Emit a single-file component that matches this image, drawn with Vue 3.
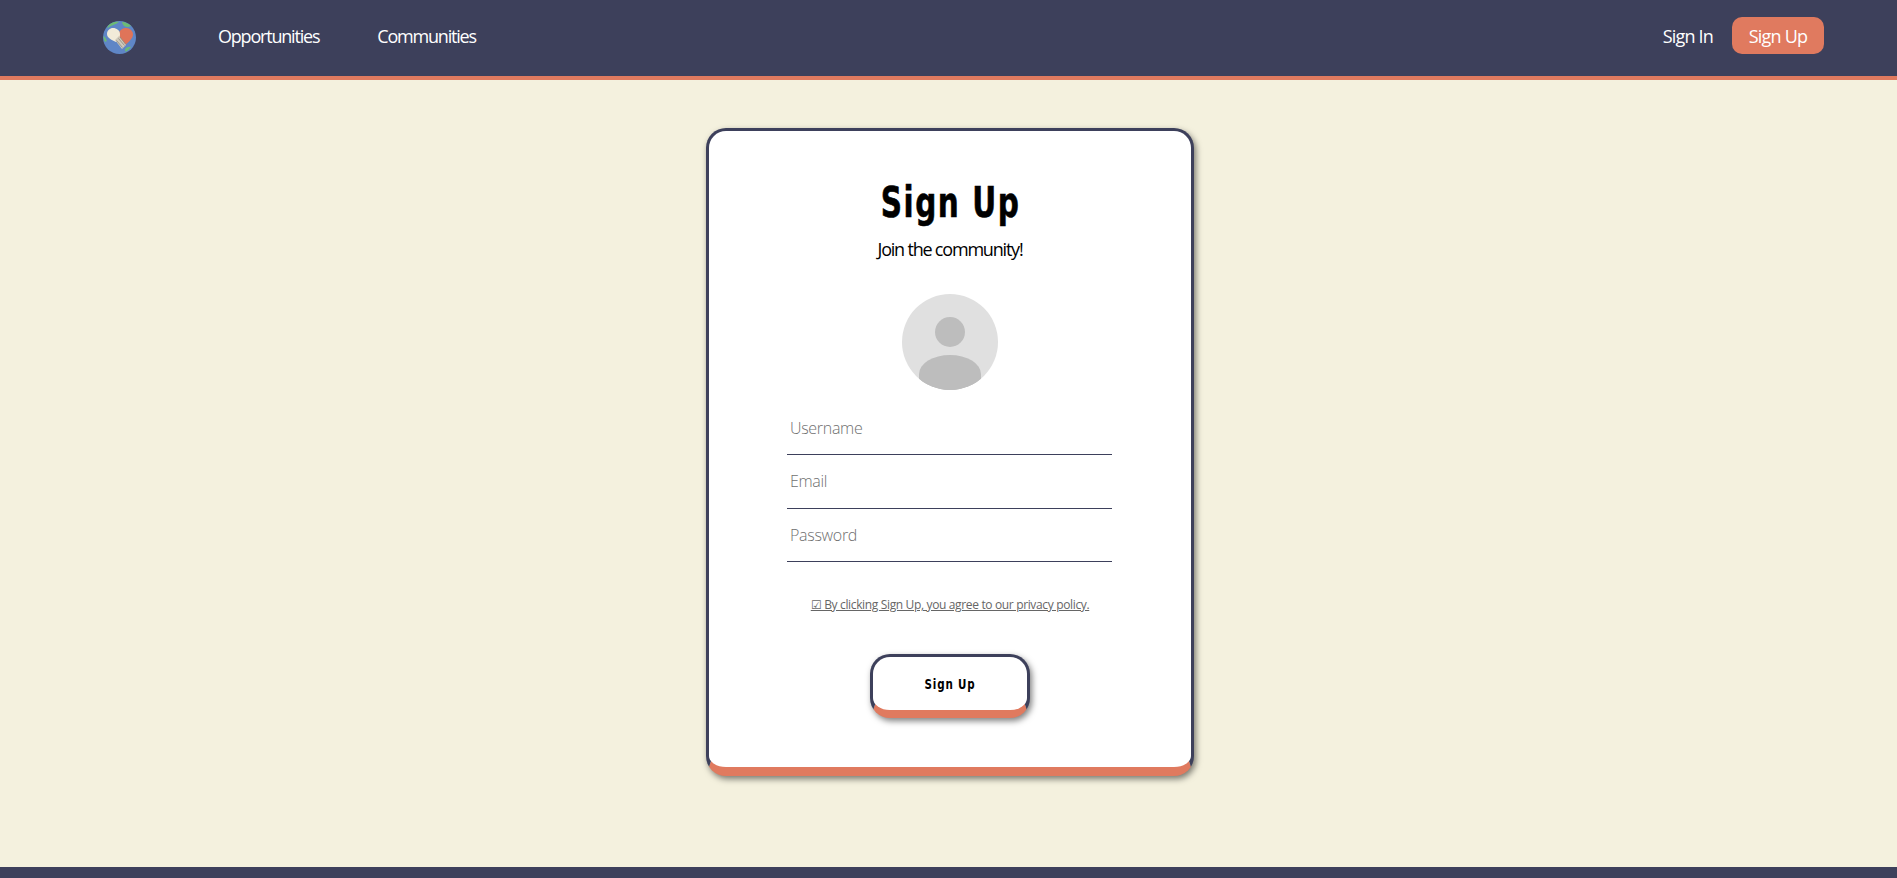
<script setup>
const navLinks = ['Opportunities', 'Communities']
const fields = [
  { name: 'username', type: 'text', placeholder: 'Username' },
  { name: 'email', type: 'email', placeholder: 'Email' },
  { name: 'password', type: 'password', placeholder: 'Password' }
]
</script>

<template>
  <div class="page">
    <header class="navbar">
      <a class="logo" href="#">
        <svg width="33" height="33" viewBox="0 0 33 33">
          <circle cx="16.500" cy="16.500" r="16.500" fill="#5f86c6" />
          <path d="M7 3C10 1.200 13 .5 16 .5c-1 1.500-2.500 2.200-4 2.800C10 4.200 7 5 4.500 7.500 4 6 5.500 4 7 3z" fill="#6dbb74" />
          <path d="M19 .8c3.500.5 6.500 1.800 9 4.200-2 1.200-4 1.400-6 .6C20.500 5 19.300 3 19 .8z" fill="#6dbb74" />
          <path d="M.6 15c1.500 1 2.500 2.500 3.200 5-.8.800-1.600.8-2.100.4C1 19 .4 17 .6 15z" fill="#6dbb74" />
          <path d="M23 27c1.800-.8 3.500-1.500 5-1-1.500 2.200-3.500 3.800-5.500 4.800-.7-1.200-.5-2.800.5-3.800z" fill="#6dbb74" />
          <path d="M16 12C17 8.500 20 7 23 7c4 0 7 3 7 6.500S26 21 21 25l-5-6z" fill="#df7459" />
          <path d="M4 13c0-3.500 3-6 6-6 3.500 0 7 2.500 7 6 0 2-.5 3.500-1 5l-3 3c-4-2-9-4-9-8z" fill="#f1ebd9" />
          <path d="M12 19l4-4 7 9-4 4z" fill="#cfc9ba" />
          <path d="M13.500 19.500l6 7M15.500 17.500l6 7M17 16l5.500 7" stroke="#8e8a80" stroke-width=".8" fill="none" />
        </svg>
      </a>
      <nav class="nav-links">
        <a v-for="link in navLinks" :key="link" class="nav-link nav-link-tight" href="#">{{ link }}</a>
      </nav>
      <div class="nav-auth">
        <a class="nav-link" href="#">Sign In</a>
        <a class="nav-signup" href="#">Sign Up</a>
      </div>
    </header>

    <main class="content">
      <form class="card" @submit.prevent>
        <h1 class="title">Sign Up</h1>
        <p class="subtitle">Join the community!</p>

        <svg class="avatar" width="96" height="96" viewBox="0 0 96 96">
          <defs>
            <clipPath id="avatar-clip"><circle cx="48" cy="48" r="48" /></clipPath>
          </defs>
          <circle cx="48" cy="48" r="48" fill="#e0e0e0" />
          <circle cx="48" cy="38" r="15" fill="#bdbdbd" />
          <g clip-path="url(#avatar-clip)">
            <ellipse cx="48" cy="80" rx="31" ry="19" fill="#bdbdbd" />
            <rect x="17" y="80" width="62" height="16" fill="#bdbdbd" />
          </g>
        </svg>

        <div class="fields">
          <input
            v-for="field in fields"
            :key="field.name"
            class="field"
            :type="field.type"
            :name="field.name"
            :placeholder="field.placeholder"
          />
        </div>

        <a class="policy" href="#">☑ By clicking Sign Up, you agree to our privacy policy.</a>

        <button class="submit" type="submit"><span class="submit-label">Sign Up</span></button>
      </form>
    </main>

    <footer class="footer"></footer>
  </div>
</template>

<style>
html,
body {
  margin: 0;
  overflow: hidden;
}
</style>

<style scoped>
.page {
  display: flex;
  flex-direction: column;
  height: 878px;
  background: #f4f1de;
  font-family: 'Open Sans', 'Noto Sans', sans-serif;
}

.navbar {
  display: flex;
  align-items: center;
  flex-shrink: 0;
  height: 71px;
  padding: 0 73px 5px 103px;
  background: #3d405b;
  border-bottom: 4px solid #e07a5f;
}

.logo {
  display: flex;
  width: 33px;
  height: 33px;
  margin-top: 3px;
}

.nav-links {
  display: flex;
  gap: 58px;
  margin-left: 82px;
}

.nav-link {
  color: #fff;
  font-size: 18px;
  font-weight: 500;
  letter-spacing: -0.8px;
  text-decoration: none;
}

.nav-link-tight {
  letter-spacing: -1.2px;
}

.nav-auth {
  display: flex;
  align-items: center;
  gap: 19px;
  margin-left: auto;
}

.nav-signup {
  display: flex;
  align-items: center;
  justify-content: center;
  width: 92px;
  height: 37px;
  border-radius: 10px;
  background: #e07a5f;
  color: #fff;
  font-size: 18px;
  font-weight: 500;
  letter-spacing: -0.8px;
  text-decoration: none;
}

.content {
  flex: 1;
  display: flex;
  justify-content: center;
  align-items: flex-start;
  padding: 48px 0 0 3px;
}

.card {
  display: flex;
  flex-direction: column;
  align-items: center;
  box-sizing: border-box;
  width: 488px;
  height: 648px;
  padding-top: 46px;
  background: #fff;
  border: 3px solid #3d405b;
  border-bottom: 9px solid #e07a5f;
  border-radius: 20px;
  box-shadow: 2px 3px 6px rgba(0, 0, 0, 0.5);
}

.title {
  margin: 0;
  color: #000;
  font-family: 'DejaVu Sans Condensed', 'DejaVu Sans', sans-serif;
  font-size: 42px;
  font-weight: 700;
  line-height: 52px;
  letter-spacing: 2px;
  -webkit-text-stroke: 0.6px #000;
  transform: scaleX(0.78);
}

.subtitle {
  margin: 8px 0 0;
  color: #000;
  font-size: 18px;
  line-height: 24px;
  letter-spacing: -1.2px;
}

.avatar {
  display: block;
  margin-top: 33px;
}

.fields {
  display: flex;
  flex-direction: column;
  width: 325px;
  margin: 11.5px 0 0 -1px;
}

.field {
  box-sizing: border-box;
  width: 100%;
  height: 53.5px;
  padding: 0 3px;
  background: transparent;
  border: 0;
  border-bottom: 1px solid #3d405b;
  outline: none;
  font-family: inherit;
  font-size: 16px;
  font-weight: 300;
  letter-spacing: -0.3px;
}

.field::placeholder {
  color: #6f6f6f;
}

.policy {
  margin-top: 35px;
  color: #666;
  font-size: 12px;
  line-height: 16px;
  letter-spacing: -0.35px;
  text-decoration: underline;
}

.submit {
  box-sizing: border-box;
  width: 160px;
  height: 64px;
  margin-top: 41px;
  padding: 0;
  background: #fff;
  border: 3px solid #3d405b;
  border-bottom: 8px solid #e07a5f;
  border-radius: 20px;
  box-shadow: 2px 3px 6px rgba(0, 0, 0, 0.5);
  color: #000;
  font-family: 'DejaVu Sans Condensed', 'DejaVu Sans', sans-serif;
  font-size: 14px;
  font-weight: 700;
  letter-spacing: 1px;
}

.submit-label {
  display: inline-block;
  transform: scaleX(0.82);
}

.footer {
  flex-shrink: 0;
  height: 11px;
  background: #3d405b;
}
</style>
